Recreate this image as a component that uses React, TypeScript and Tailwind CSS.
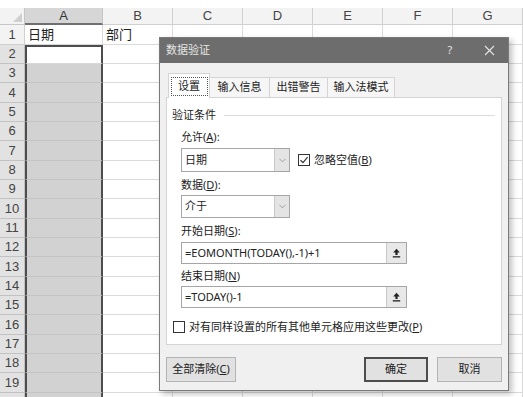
import { ChevronDown } from 'lucide-react'

const cols = ['B', 'C', 'D', 'E', 'F', 'G']
const rows = Array.from({ length: 20 }, (_, i) => i + 1)

const ui = { fontFamily: "'Noto Sans', 'Noto Sans CJK SC', sans-serif" }

function Check({ checked }: { checked?: boolean }) {
  return (
    <span className="flex h-[12px] w-[12px] items-center justify-center border border-[#333] bg-white">
      {checked && (
        <svg width="10" height="10" viewBox="0 0 10 10">
          <path d="M1.5 5.2 L4 7.6 L8.6 2.2" fill="none" stroke="#333" strokeWidth="1.2" />
        </svg>
      )}
    </span>
  )
}

function Select({ value, h }: { value: string; h: string }) {
  return (
    <div className={`flex w-[109px] border border-[#a6a6a6] bg-white ${h}`}>
      <span className="flex flex-1 items-center pl-[3px] text-[11px] text-[#222]">{value}</span>
      <span className="flex w-[15px] items-center justify-center border-l border-[#c8c8c8] bg-[#e4e4e4]">
        <ChevronDown size={11} strokeWidth={1.3} color="#777" />
      </span>
    </div>
  )
}

function RefInput({ value }: { value: string }) {
  return (
    <div className="flex h-[22px] w-[226px] border border-[#a6a6a6] bg-white">
      <span className="flex flex-1 items-center pl-[3px] text-[11px] text-[#222]">{value}</span>
      <span className="flex w-[20px] items-center justify-center border-l border-[#c8c8c8] bg-[#e8e8e8]">
        <svg width="9" height="10" viewBox="0 0 9 10">
          <path d="M4.5 0.8 L1.2 4.4 H3.4 V7 H5.6 V4.4 H7.8 Z" fill="#222" />
          <rect x="0.8" y="8.2" width="7.4" height="1.3" fill="#222" />
        </svg>
      </span>
    </div>
  )
}

function Label({ text, k, tail }: { text: string; k: string; tail?: string }) {
  return (
    <div className="h-[16px] text-[11px] leading-[16px] text-[#222]">
      {text}(<span className="underline">{k}</span>){tail}
    </div>
  )
}

function Dialog() {
  return (
    <div
      className="absolute left-[159px] top-[37px] flex h-[354px] w-[350px] flex-col border border-[#7a7a7a] bg-[#f0f0f0] shadow-[3px_3px_6px_rgba(0,0,0,0.25)]"
      style={ui}
    >
      {/* title */}
      <div className="flex h-[25px] items-center bg-[#6d6d6d] pl-[6px] text-[11px] text-[#e6e6e6]">
        <span className="flex-1">数据验证</span>
        <span className="w-[20px] text-center text-[11px]">?</span>
        <span className="ml-[19px] mr-[9px] flex w-[20px] items-center justify-center">
          <svg width="11" height="11" viewBox="0 0 11 11">
            <path d="M1 1 L10 10 M10 1 L1 10" stroke="#e6e6e6" strokeWidth="1.1" />
          </svg>
        </span>
      </div>

      {/* tabs */}
      <div className="mt-[10px] flex h-[24px] items-end pl-[8px] text-[11px] text-[#222]">
        <div className="relative z-10 -mb-px flex h-[25px] w-[42px] items-center justify-center border border-b-0 border-[#d4d4d4] bg-white">
          <span className="flex h-[19px] w-[37px] items-center justify-center border border-dotted border-[#555]">
            设置
          </span>
        </div>
        <div className="flex h-[20px] w-[60px] items-center justify-center border-r border-t border-[#d4d4d4] bg-[#f6f6f6]">
          输入信息
        </div>
        <div className="flex h-[20px] w-[58px] items-center justify-center border-r border-t border-[#d4d4d4] bg-[#f6f6f6]">
          出错警告
        </div>
        <div className="flex h-[20px] w-[67px] items-center justify-center border-r border-t border-[#d4d4d4] bg-[#f6f6f6]">
          输入法模式
        </div>
      </div>

      {/* panel */}
      <div className="mx-[6px] flex h-[248px] flex-col border border-[#d4d4d4] bg-white pt-[9px]">
        <div className="flex items-center pl-[5px] pr-[6px]">
          <span className="text-[11px] leading-[16px] text-[#222]">验证条件</span>
          <span className="ml-[8px] h-px flex-1 bg-[#dcdcdc]" />
        </div>

        <div className="flex flex-col pl-[14px]">
          <div className="mt-[6px]">
            <Label text="允许" k="A" tail=":" />
          </div>
          <div className="mt-[3px] flex items-center gap-[8px]">
            <Select value="日期" h="h-[24px]" />
            <Check checked />
            <span className="-ml-[4px] text-[11px] text-[#222]">
              忽略空值(<span className="underline">B</span>)
            </span>
          </div>
          <div className="mt-[5px]">
            <Label text="数据" k="D" tail=":" />
          </div>
          <div className="mt-[2px]">
            <Select value="介于" h="h-[23px]" />
          </div>
          <div className="mt-[5px]">
            <Label text="开始日期" k="S" tail=":" />
          </div>
          <div className="mt-[3px]">
            <RefInput value="=EOMONTH(TODAY(),-1)+1" />
          </div>
          <div className="mt-[4px]">
            <Label text="结束日期" k="N" />
          </div>
          <div className="mt-[2px]">
            <RefInput value="=TODAY()-1" />
          </div>
        </div>

        <div className="mt-[11px] flex items-center gap-[4px] pl-[6px]">
          <Check />
          <span className="text-[11px] leading-[16px] text-[#222]">
            对有同样设置的所有其他单元格应用这些更改(<span className="underline">P</span>)
          </span>
        </div>
      </div>

      {/* buttons */}
      <div className="mt-[12px] flex justify-between px-[6px] text-[11px] text-[#222]">
        <button className="flex h-[25px] w-[70px] items-center justify-center border border-[#b4b4b4] bg-[#e1e1e1]">
          全部清除(<span className="underline">C</span>)
        </button>
        <div className="flex gap-[9px]">
          <button className="flex h-[25px] w-[64px] items-center justify-center border-2 border-[#4d4d4d] bg-[#e1e1e1]">
            确定
          </button>
          <button className="flex h-[25px] w-[65px] items-center justify-center border border-[#b4b4b4] bg-[#e1e1e1]">
            取消
          </button>
        </div>
      </div>
    </div>
  )
}

export default function App() {
  const cell = { fontFamily: "'Liberation Sans', 'Noto Sans CJK SC', sans-serif" }
  return (
    <div className="relative h-[397px] w-[523px] overflow-hidden bg-white" style={cell}>
      <div className="h-[8px]" />

      {/* column headers */}
      <div className="flex h-[17px] text-[13px] text-[#444]">
        <div className="flex w-[25px] items-end justify-end border-b border-r border-[#c6c6c6] bg-[#f3f3f3] pb-[2px] pr-[2px]">
          <svg width="9" height="9" viewBox="0 0 9 9">
            <path d="M9 0 V9 H0 Z" fill="#cfcfcf" />
          </svg>
        </div>
        <div className="flex w-[78px] items-center justify-center border-b-2 border-r border-b-[#6f6f6f] border-r-[#c6c6c6] bg-[#d6d6d6] text-[#333]">
          A
        </div>
        {cols.map((c) => (
          <div
            key={c}
            className="flex w-[70px] items-center justify-center border-b border-r border-[#d0d0d0] bg-[#f3f3f3]"
          >
            {c}
          </div>
        ))}
      </div>

      {/* rows */}
      {rows.map((r) => {
        const h = (r - 1) % 3 === 0 ? 'h-[20px]' : 'h-[19px]'
        const sel = r >= 2
        return (
          <div key={r} className={`flex ${h}`}>
            <div
              className={`flex w-[25px] items-center justify-center border-b border-r text-[13px] ${
                sel ? 'border-[#c2c2c2] bg-[#e2e2e2] text-[#444]' : 'border-[#d0d0d0] bg-[#f3f3f3] text-[#444]'
              }`}
            >
              {r}
            </div>
            <div
              className={`flex w-[78px] items-center pl-[3px] text-[13px] text-[#222] ${
                r === 1
                  ? 'border-b border-r border-[#d8d8d8] bg-white'
                  : r === 2
                    ? 'border-x-2 border-t-2 border-b border-x-[#4d4d4d] border-t-[#4d4d4d] border-b-[#d8d8d8] bg-white'
                    : 'border-x-2 border-b border-x-[#4d4d4d] border-b-[#c4c4c4] bg-[#d2d2d2]'
              }`}
            >
              {r === 1 ? '日期' : ''}
            </div>
            {cols.map((c) => (
              <div
                key={c}
                className="flex w-[70px] items-center border-b border-r border-[#dadada] pl-[3px] text-[13px] text-[#222]"
              >
                {r === 1 && c === 'B' ? '部门' : ''}
              </div>
            ))}
          </div>
        )
      })}

      <Dialog />
    </div>
  )
}
